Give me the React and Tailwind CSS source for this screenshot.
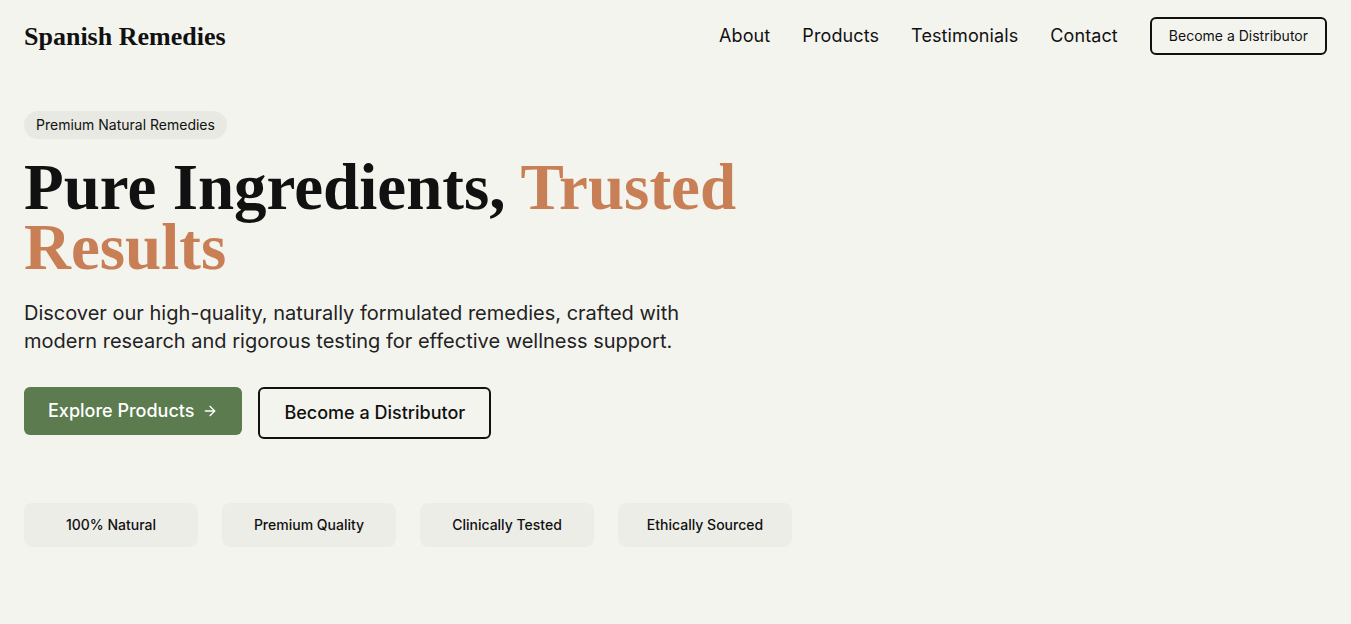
import React from "react";
import { ArrowRight } from "lucide-react";

const serif = "font-['Liberation_Serif',serif]";

const features = ["100% Natural", "Premium Quality", "Clinically Tested", "Ethically Sourced"];

const App = () => {
  return (
    <div className="min-h-screen bg-[#f4f4ef] text-[#111] font-['Inter',sans-serif]">
      {/* Header */}
      <header className="flex h-[72px] items-center justify-between px-6">
        <a className={`${serif} text-[26px] font-bold text-[#111]`}>Spanish Remedies</a>
        <nav className="flex items-center gap-8">
          <a className="text-lg tracking-[0.1px] text-[#111]">About</a>
          <a className="text-lg tracking-[0.1px] text-[#111]">Products</a>
          <a className="text-lg tracking-[0.1px] text-[#111]">Testimonials</a>
          <a className="text-lg tracking-[0.1px] text-[#111]">Contact</a>
          <button className="rounded-md border-2 border-[#111] px-[17px] py-[7px] text-sm leading-5">
            Become a Distributor
          </button>
        </nav>
      </header>

      {/* Hero */}
      <section className="px-6 pt-[39px]">
        <div className="max-w-3xl">
          <span className="inline-block rounded-full bg-[#e7e9e2] px-3 py-1 text-sm leading-5">
            Premium Natural Remedies
          </span>
          <h1 className={`${serif} mt-[18px] text-[65px] leading-[60px] font-bold`}>
            Pure Ingredients, <span className="text-[#c97f55]">Trusted Results</span>
          </h1>
          <p className="mt-[22px] max-w-[700px] text-xl leading-7 text-[#222]">
            Discover our high-quality, naturally formulated remedies, crafted with modern research and rigorous testing for effective wellness support.
          </p>
        </div>
        <div className="mt-8 flex items-start gap-4">
          <button className="flex items-center gap-2 rounded-md bg-[#5c7b4e] px-6 py-3 text-lg leading-6 font-medium text-white">
            Explore Products
            <ArrowRight size={16} strokeWidth={2} />
          </button>
          <button className="rounded-md border-2 border-[#111] px-6 py-3 text-lg leading-6 font-medium">
            Become a Distributor
          </button>
        </div>
        <div className="mt-16 flex gap-6">
          {features.map((f) => (
            <div key={f} className="flex h-11 w-[174px] items-center justify-center rounded-lg bg-[#ededE8] text-sm font-medium">
              {f}
            </div>
          ))}
        </div>
      </section>
    </div>
  );
};

export default App;
